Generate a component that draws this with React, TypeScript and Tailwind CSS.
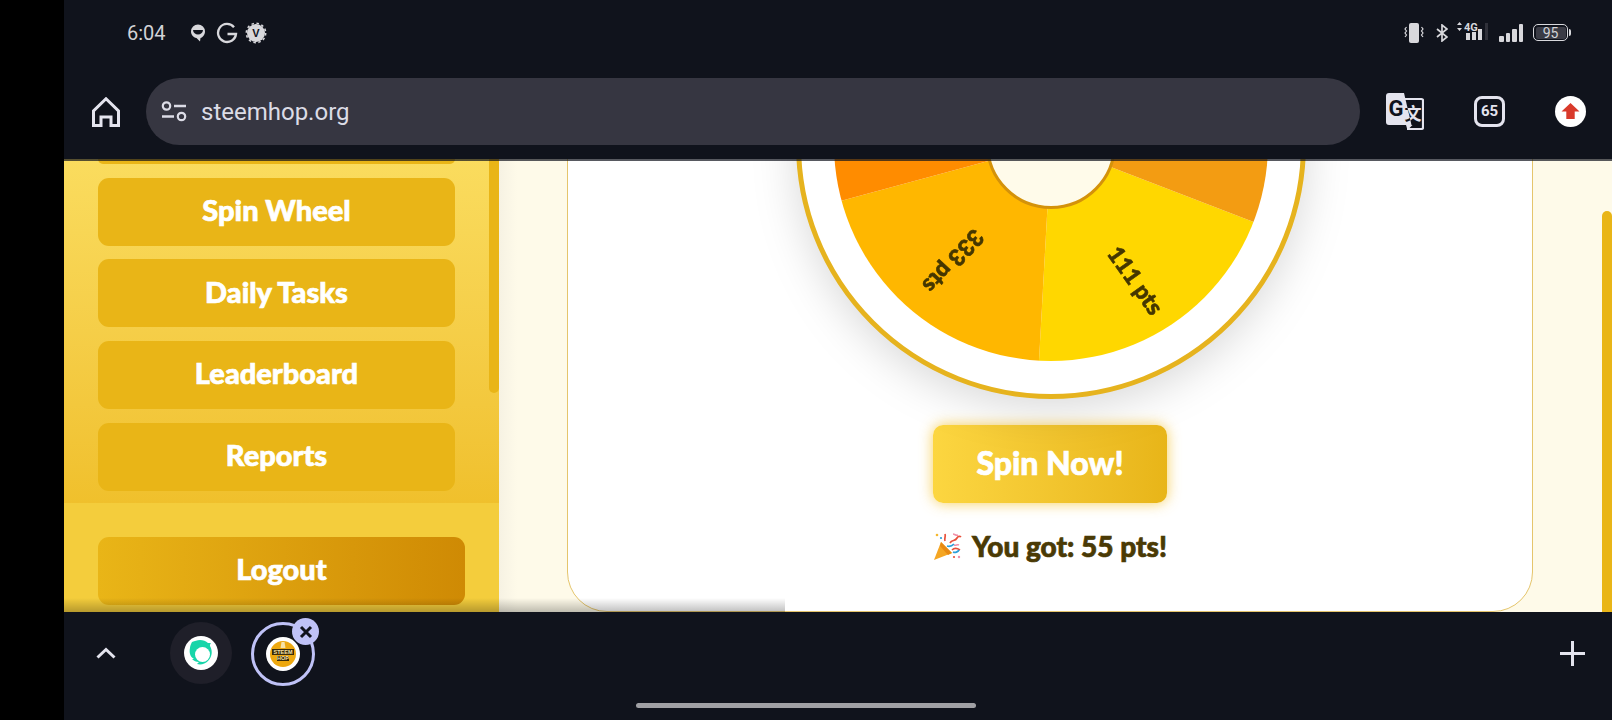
const heavy = "font-['Lato','Noto_Sans',sans-serif] font-black [-webkit-text-stroke:0.7px_currentColor]";

function StatusLeft() {
  return (
    <div className="flex items-center pl-[63px]">
      <span className="font-['Roboto',sans-serif] text-[20px] text-[#d2d2d6] w-[40px] leading-none">6:04</span>
      <svg width="16" height="18" viewBox="0 0 16 18" className="ml-[23px]">
        <path d="M8 0.500a7 7 0 0 1 7 7c0 3.400-2.300 5.800-4.500 6.500l-0.500 3.500-3.500-3.500C3.300 13.300 1 10.900 1 7.500a7 7 0 0 1 7-7z" fill="#d8d8dc" />
        <path d="M3 6h10c-0.300 2.800-2.300 4.500-5 4.500S3.300 8.800 3 6z" fill="#10131c" />
      </svg>
      <svg width="22" height="22" viewBox="0 0 22 22" className="ml-[10px]">
        <path d="M18 5.200A9 9 0 1 0 20 12H11.500" fill="none" stroke="#d8d8dc" strokeWidth="2.300" />
      </svg>
      <svg width="22" height="22" viewBox="0 0 22 22" className="ml-[7px]">
        <circle cx="11" cy="11" r="9" fill="#d8d8dc" />
        <circle cx="11" cy="11" r="9.700" fill="none" stroke="#d8d8dc" strokeWidth="1.500" strokeDasharray="2.500 2.600" />
        <text x="11" y="15" textAnchor="middle" fontSize="11" fontWeight="900" fontFamily="Liberation Sans" fill="#10131c">V</text>
      </svg>
    </div>
  );
}

function StatusRight() {
  return (
    <div className="flex items-center pr-[41px]">
      <svg width="20" height="20" viewBox="0 0 20 20" className="mr-[12px]">
        <rect x="5" y="0" width="10" height="20" rx="2" fill="#d8d8dc" />
        <path d="M2.500 4l-1.500 2 1.500 2-1.500 2 1.500 2-1.500 2M17.500 4l1.500 2-1.500 2 1.500 2-1.500 2 1.500 2" fill="none" stroke="#d8d8dc" strokeWidth="1.200" />
      </svg>
      <svg width="12" height="18" viewBox="0 0 12 18" className="mr-[9px]">
        <path d="M1 5l10 8-5 4V1l5 4-10 8" fill="none" stroke="#d8d8dc" strokeWidth="1.700" />
      </svg>
      <svg width="34" height="20" viewBox="0 0 34 20" className="mr-[8px] -mt-[4px]">
        <path d="M0 4l2.500-3L5 4zM0 7l2.500 3L5 7z" fill="#d8d8dc" />
        <text x="7" y="10" fontSize="11" fontWeight="700" fontFamily="Roboto" fill="#d8d8dc">4G</text>
        <rect x="9" y="12" width="4" height="7" fill="#d8d8dc" />
        <rect x="15" y="11" width="4" height="8" fill="#d8d8dc" />
        <rect x="21" y="8" width="4" height="11" fill="#d8d8dc" />
        <rect x="28" y="2" width="3" height="17" fill="#2f3039" />
      </svg>
      <svg width="25" height="18" viewBox="0 0 25 18" className="mr-[9px]">
        <rect x="0" y="12" width="5" height="6" rx="1" fill="#d8d8dc" />
        <rect x="7" y="9" width="4" height="9" rx="1" fill="#d8d8dc" />
        <rect x="13" y="5" width="5" height="13" rx="1" fill="#d8d8dc" />
        <rect x="20" y="0" width="4" height="18" rx="1" fill="#d8d8dc" />
      </svg>
      <div className="w-[35px] h-[17px] rounded-[5px] border-[1.5px] border-[#d8d8dc] p-[1.5px]">
        <div className="h-full rounded-[2px] bg-[#3a3b45] flex items-center justify-center font-['Roboto',sans-serif] text-[14px] leading-none text-[#d2d2d6]">95</div>
      </div>
      <div className="w-[2px] h-[7px] ml-[1px] bg-[#d8d8dc] rounded-r-sm" />
    </div>
  );
}

function Toolbar() {
  return (
    <div className="h-[95px] flex items-center pl-[28px]">
      <svg width="28" height="30" viewBox="0 0 28 30">
        <path d="M1.500 28.500V14L14 1.800 26.500 14v14.500H19V20H9v8.500z" fill="none" stroke="#e4e4ee" strokeWidth="3" />
      </svg>
      <div className="ml-[26px] w-[1214px] h-[67px] rounded-full bg-[#363641] flex items-center pl-[15px]">
        <svg width="26" height="21" viewBox="0 0 26 21">
          <circle cx="5.500" cy="5" r="3.700" fill="none" stroke="#dcdce6" strokeWidth="2.200" />
          <path d="M13 5h12M1 15.500h12" stroke="#dcdce6" strokeWidth="2.400" />
          <circle cx="20.500" cy="15.500" r="3.700" fill="none" stroke="#dcdce6" strokeWidth="2.200" />
        </svg>
        <span className="ml-[14px] font-['Roboto',sans-serif] text-[24px] text-[#dcdce6] leading-none">steemhop.org</span>
      </div>
      <svg width="38" height="38" viewBox="0 0 38 38" className="ml-[26px]">
        <defs>
          <clipPath id="leftPage">
            <path d="M0 0h18l7.500 32H0z" />
          </clipPath>
        </defs>
        <path d="M18 6h17.500a1.500 1.500 0 0 1 1.500 1.500v27a1.500 1.500 0 0 1-1.500 1.500H21" fill="none" stroke="#e4e4ee" strokeWidth="2.200" />
        <text x="27" y="27" textAnchor="middle" fontSize="17" fontWeight="700" fontFamily="Noto Sans CJK SC" fill="#e4e4ee">文</text>
        <path d="M3 0h15l7.500 32H3a3 3 0 0 1-3-3V3a3 3 0 0 1 3-3z" fill="#e4e4ee" />
        <path d="M20 32l1.500 5 5-5z" fill="#e4e4ee" />
        <text x="10" y="23" textAnchor="middle" fontSize="22" fontWeight="700" fontFamily="Roboto" fill="#10131c">G</text>
        <g clipPath="url(#leftPage)">
          <text x="27" y="27" textAnchor="middle" fontSize="17" fontWeight="700" fontFamily="Noto Sans CJK SC" fill="#10131c">文</text>
        </g>
      </svg>
      <div className="ml-[50px] w-[31px] h-[31px] rounded-[8px] border-[3px] border-[#e4e4ee] flex items-center justify-center font-['Roboto',sans-serif] font-bold text-[15px] leading-none text-[#e4e4ee]">65</div>
      <svg width="31" height="31" viewBox="0 0 31 31" className="ml-[50px]">
        <circle cx="15.500" cy="15.500" r="15.500" fill="#fff" />
        <path d="M15.500 7l9 8.500h-4.800V23h-8.400v-7.500H6.500z" fill="#d93a2b" />
      </svg>
    </div>
  );
}

function NavButton({ label }: { label: string }) {
  return (
    <div className={`h-[68px] w-[357px] shrink-0 rounded-[11px] bg-[#e9b517] flex items-center justify-center pb-[4px] text-white text-[29px] leading-none ${heavy}`}>
      {label}
    </div>
  );
}

function Sidebar() {
  return (
    <div className="w-[435px] shrink-0 flex flex-col relative">
      <div className="h-[344px] bg-gradient-to-b from-[#fadc5e] to-[#f0c02c] px-[34px] flex flex-col gap-[13.67px] overflow-hidden">
        <div className="h-[5px] w-[357px] shrink-0 rounded-b-[11px] bg-[#e9b517]" />
        <NavButton label="Spin Wheel" />
        <NavButton label="Daily Tasks" />
        <NavButton label="Leaderboard" />
        <NavButton label="Reports" />
      </div>
      <div className="flex-1 bg-[#f4cd3c] pl-[34px] pt-[34px]">
        <div className={`h-[68px] w-[367px] rounded-[11px] bg-gradient-to-r from-[#e9b517] to-[#cf8a04] flex items-center justify-center pb-[5px] text-white text-[29px] leading-none ${heavy}`}>
          Logout
        </div>
      </div>
      <div className="absolute right-0 top-0 w-[10px] h-[234px] rounded-b-full bg-[#e9b517]" />
    </div>
  );
}

function Wheel() {
  return (
    <svg width="520" height="260" viewBox="790 159 520 260" className="shrink-0 overflow-visible drop-shadow-[0_10px_22px_rgba(0,0,0,0.15)]">
      <defs>
        <clipPath id="pie">
          <circle cx="1051" cy="144" r="217" />
        </clipPath>
      </defs>
      <circle cx="1051" cy="144" r="252.500" fill="#fff" stroke="#e6b31e" strokeWidth="5" />
      <g clipPath="url(#pie)">
        <polygon points="1051,144 1355,261 1355,470 1033,469" fill="#ffd700" />
        <polygon points="1051,144 1033,469 741,470 741,228" fill="#ffb700" />
        <polygon points="1051,144 741,228 741,0 1051,0" fill="#ff8c00" />
        <polygon points="1051,144 1355,0 1355,261" fill="#f39c12" />
      </g>
      <circle cx="1051" cy="144" r="63.500" fill="#fffbea" stroke="#d4920a" strokeWidth="3" />
      <text transform="translate(954 262) rotate(133)" textAnchor="middle" dominantBaseline="central" fontSize="23" fontWeight="900" fontFamily="Lato" fill="#453700" stroke="#453700" strokeWidth="0.6">333 pts</text>
      <text transform="translate(1136 280) rotate(54.500)" textAnchor="middle" dominantBaseline="central" fontSize="23" fontWeight="900" fontFamily="Lato" fill="#453700" stroke="#453700" strokeWidth="0.6">111 pts</text>
    </svg>
  );
}

function Popper() {
  return (
    <svg width="30" height="30" viewBox="0 0 30 30" className="shrink-0">
      <path d="M8 11l11 11L1 29z" fill="#f5a623" />
      <path d="M8 11l11 11-4 2L7 15z" fill="#e88a12" />
      <path d="M12 10c-1-3 1-4 0-7M17 12c2-4 5-1 7-5 1-2 3-2 4-1M19 19c2-2 5-2 8 0" fill="none" stroke="#e8503a" strokeWidth="1.700" />
      <path d="M20 3c2 0 3 2 5 1M21 14c2 1 3-1 5 0" fill="none" stroke="#f08fa8" strokeWidth="1.700" />
      <path d="M14 15c3 1 5 0 7-2M20 21c2 1 5 0 6-2" fill="none" stroke="#2a9fd8" strokeWidth="1.700" />
      <circle cx="4" cy="4" r="1.300" fill="#f5b82e" />
      <circle cx="8" cy="7" r="1.100" fill="#2a9fd8" />
      <circle cx="26" cy="26" r="1.200" fill="#f08fa8" />
      <circle cx="21" cy="26" r="1.100" fill="#e8503a" />
    </svg>
  );
}

function Main() {
  return (
    <div className="flex-1 relative overflow-hidden bg-[#fefae9]">
      <div className="absolute left-0 top-0 bottom-0 w-[18px] bg-gradient-to-r from-[#f6f2e3] to-transparent" />
      <div className="relative ml-[68px] w-[966px] h-[473px] -mt-[20px] bg-white border border-[#e5c56c] rounded-b-[40px] pt-[19px] flex flex-col items-center">
        <Wheel />
        <div className={`mt-[6px] w-[234px] h-[78px] shrink-0 rounded-[10px] bg-gradient-to-r from-[#fcd640] to-[#e8b518] shadow-[0_0_14px_rgba(245,195,50,0.8)] flex items-center justify-center pb-[2px] text-white text-[32px] leading-none ${heavy}`}>
          Spin Now!
        </div>
        <div className="mt-[28px] flex items-center gap-[9px]">
          <Popper />
          <span className={`text-[#4a3a05] text-[28px] leading-none ${heavy}`}>You got: 55 pts!</span>
        </div>
      </div>
      <div className="absolute right-0 top-[52px] bottom-0 w-[10px] rounded-t-full rounded-b-sm bg-[#e9b517]" />
    </div>
  );
}

function BottomBar() {
  return (
    <div className="h-[108px] relative flex items-start pt-[10px]">
      <svg width="20" height="12" viewBox="0 0 20 12" className="ml-[32px] mt-[25px]">
        <path d="M1.500 10.500L10 2.500l8.500 8" fill="none" stroke="#e4e4ee" strokeWidth="3" />
      </svg>
      <div className="ml-[54px] w-[62px] h-[62px] rounded-full bg-[#1f1f29] flex items-center justify-center">
        <svg width="34" height="34" viewBox="0 0 34 34">
          <circle cx="17" cy="17" r="17" fill="#fff" />
          <path d="M8 6c3-1 5-2 8-2 3 0 6 1 8 3l3 0c-1 1-1 2-1 3 3 5 2 11-2 15-3 3-7 4-11 3l2-2c-3 0-5-1-7-3l2 0C6 21 5 16 6 12c0-2 1-4 2-6z" fill="#17d5a9" />
          <circle cx="18.500" cy="18.500" r="7.500" fill="#fff" />
        </svg>
      </div>
      <div className="relative ml-[19px] w-[64px] h-[64px] rounded-full border-[3px] border-[#bfc2f7] flex items-center justify-center">
        <svg width="34" height="34" viewBox="0 0 34 34">
          <circle cx="17" cy="17" r="17" fill="#fff" />
          <circle cx="17" cy="17" r="13" fill="#eda80f" />
          <path d="M15.500 5h3l1 6h-5z" fill="#f6e2a8" />
          <rect x="6" y="12" width="22" height="6" fill="#3a2c0a" />
          <rect x="11" y="19" width="12" height="5" fill="#3a2c0a" />
          <text x="17" y="16.800" textAnchor="middle" fontSize="5.500" fontWeight="700" fontFamily="Liberation Sans" fill="#f6e2a8">STEEM</text>
          <text x="17" y="23.300" textAnchor="middle" fontSize="5.500" fontWeight="700" fontFamily="Liberation Sans" fill="#f6e2a8">HOP</text>
        </svg>
        <div className="absolute -right-[7px] -top-[7px] w-[27px] h-[27px] rounded-full bg-[#bfc2f7] flex items-center justify-center">
          <svg width="14" height="14" viewBox="0 0 14 14">
            <path d="M2 2l10 10M12 2L2 12" stroke="#10131c" strokeWidth="3" />
          </svg>
        </div>
      </div>
      <svg width="25" height="25" viewBox="0 0 25 25" className="ml-auto mr-[27px] mt-[19px]">
        <path d="M12.500 0v25M0 12.500h25" stroke="#e4e4ee" strokeWidth="3" />
      </svg>
      <div className="absolute bottom-[12px] left-[572px] w-[340px] h-[5px] rounded-full bg-[#a0a0a4]" />
    </div>
  );
}

export default function App() {
  return (
    <div className="w-[1612px] h-[720px] flex bg-black overflow-hidden">
      <div className="w-[64px] shrink-0" />
      <div className="flex-1 flex flex-col bg-[#10131c]">
        <div className="h-[64px] flex items-center justify-between pt-[1px]">
          <StatusLeft />
          <StatusRight />
        </div>
        <Toolbar />
        <div className="h-[453px] flex relative">
          <Sidebar />
          <Main />
          <div className="absolute left-0 right-0 top-0 h-[2px] bg-[#10131c]/70" />
          <div className="absolute left-0 bottom-0 w-[721px] h-[14px] bg-gradient-to-t from-black/25 to-transparent" />
        </div>
        <BottomBar />
      </div>
    </div>
  );
}
